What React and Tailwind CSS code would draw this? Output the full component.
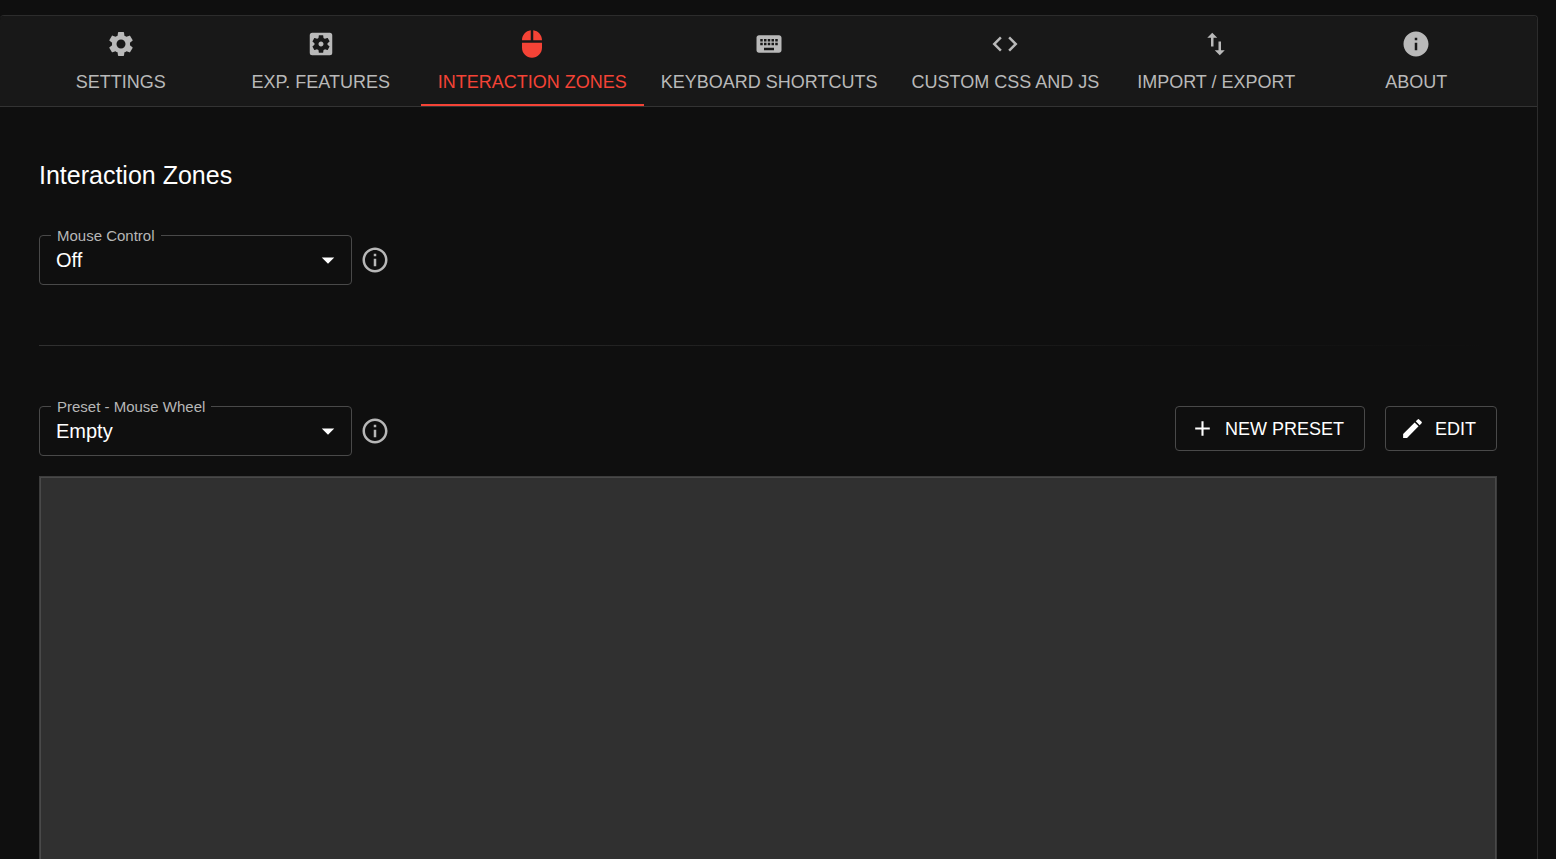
import React, { useState } from 'react';
import {
  MdSettings,
  MdSettingsApplications,
  MdMouse,
  MdKeyboard,
  MdCode,
  MdImportExport,
  MdInfo,
  MdInfoOutline,
  MdArrowDropDown,
  MdAdd,
  MdEdit
} from 'react-icons/md';

const tabs = [
  { id: 'settings', label: 'Settings', icon: MdSettings },
  { id: 'features', label: 'Exp. Features', icon: MdSettingsApplications },
  { id: 'zones', label: 'Interaction Zones', icon: MdMouse },
  { id: 'keyboard', label: 'Keyboard Shortcuts', icon: MdKeyboard },
  { id: 'custom', label: 'Custom CSS and JS', icon: MdCode },
  { id: 'import', label: 'Import / Export', icon: MdImportExport },
  { id: 'about', label: 'About', icon: MdInfo }
];

function SelectField({ id, label, options, value, onChange }) {
  return (
    <div className="flex items-center gap-2">
      <div className="relative w-[313px]">
        <label
          htmlFor={id}
          className="absolute -top-2 left-3 px-1.5 bg-[#0f0f0f] text-[15px] leading-[18px] text-[#b7b7b7]"
        >
          {label}
        </label>
        <select
          id={id}
          value={value}
          onChange={(e) => onChange(e.target.value)}
          className="w-full h-[50px] pl-4 pr-10 appearance-none bg-transparent border border-[#494949] rounded text-xl text-white focus:outline-none cursor-pointer"
        >
          {options.map((option) => (
            <option key={option} className="bg-[#0f0f0f]">{option}</option>
          ))}
        </select>
        <MdArrowDropDown size={30} className="absolute right-[9px] top-2.5 text-white pointer-events-none" />
      </div>
      <button type="button" aria-label={`About ${label}`} className="text-[#b7b7b7] cursor-pointer">
        <MdInfoOutline size={30} />
      </button>
    </div>
  );
}

function OutlinedButton({ icon: Icon, children }) {
  return (
    <button
      type="button"
      className="flex items-center gap-2.5 h-[45px] pl-3.5 pr-5 border border-[#494949] rounded text-lg leading-6 uppercase text-white cursor-pointer"
    >
      <Icon size={25} />
      <span>{children}</span>
    </button>
  );
}

export default function App() {
  const [activeTab, setActiveTab] = useState('zones');
  const [mouseControl, setMouseControl] = useState('Off');
  const [preset, setPreset] = useState('Empty');

  return (
    <div className="min-h-screen flex flex-col bg-[#0f0f0f] pt-[15px] pr-[18px] font-['Liberation_Sans',Arial,sans-serif] text-white">
      <div className="flex-1 flex flex-col border-t border-r border-[#2c2c2c] rounded-t">
        <nav role="tablist" className="flex justify-center bg-[#181818] border-b border-[#333333] rounded-t">
          {tabs.map(({ id, label, icon: Icon }) => (
            <button
              key={id}
              type="button"
              role="tab"
              aria-selected={activeTab === id}
              onClick={() => setActiveTab(id)}
              className={`flex flex-col items-center gap-3 min-w-[200px] h-[90px] px-[17px] pt-[13px] border-b-2 text-lg leading-[22px] uppercase whitespace-nowrap cursor-pointer ${
                activeTab === id ? 'border-[#f44336] text-[#f44336]' : 'border-transparent text-[#b9b9b9]'
              }`}
            >
              <Icon size={30} />
              <span>{label}</span>
            </button>
          ))}
        </nav>

        <main className="flex-1 flex flex-col pt-12 px-10 -ml-px">
          <h1 className="text-[25px] leading-10">Interaction Zones</h1>

          <div className="mt-10">
            <SelectField
              id="mouse-control"
              label="Mouse Control"
              options={['Off', 'Mouse Wheel', 'Click']}
              value={mouseControl}
              onChange={setMouseControl}
            />
          </div>

          <div className="mt-[60px] mb-[60px] h-px bg-gradient-to-r from-[#303030] to-[#0f0f0f]" />

          <div className="flex items-start justify-between">
            <SelectField
              id="preset"
              label="Preset - Mouse Wheel"
              options={['Empty', 'Default']}
              value={preset}
              onChange={setPreset}
            />
            <div className="flex gap-5">
              <OutlinedButton icon={MdAdd}>New Preset</OutlinedButton>
              <OutlinedButton icon={MdEdit}>Edit</OutlinedButton>
            </div>
          </div>

          {/* Zone canvas, runs on to the bottom of the page */}
          <div className="flex-1 flex mt-5 min-h-80 border-t border-x border-[#3c3c3c]">
            <div className="flex-1 border-t border-x border-[#494949] bg-[#303030]" />
          </div>
        </main>
      </div>
    </div>
  );
}
